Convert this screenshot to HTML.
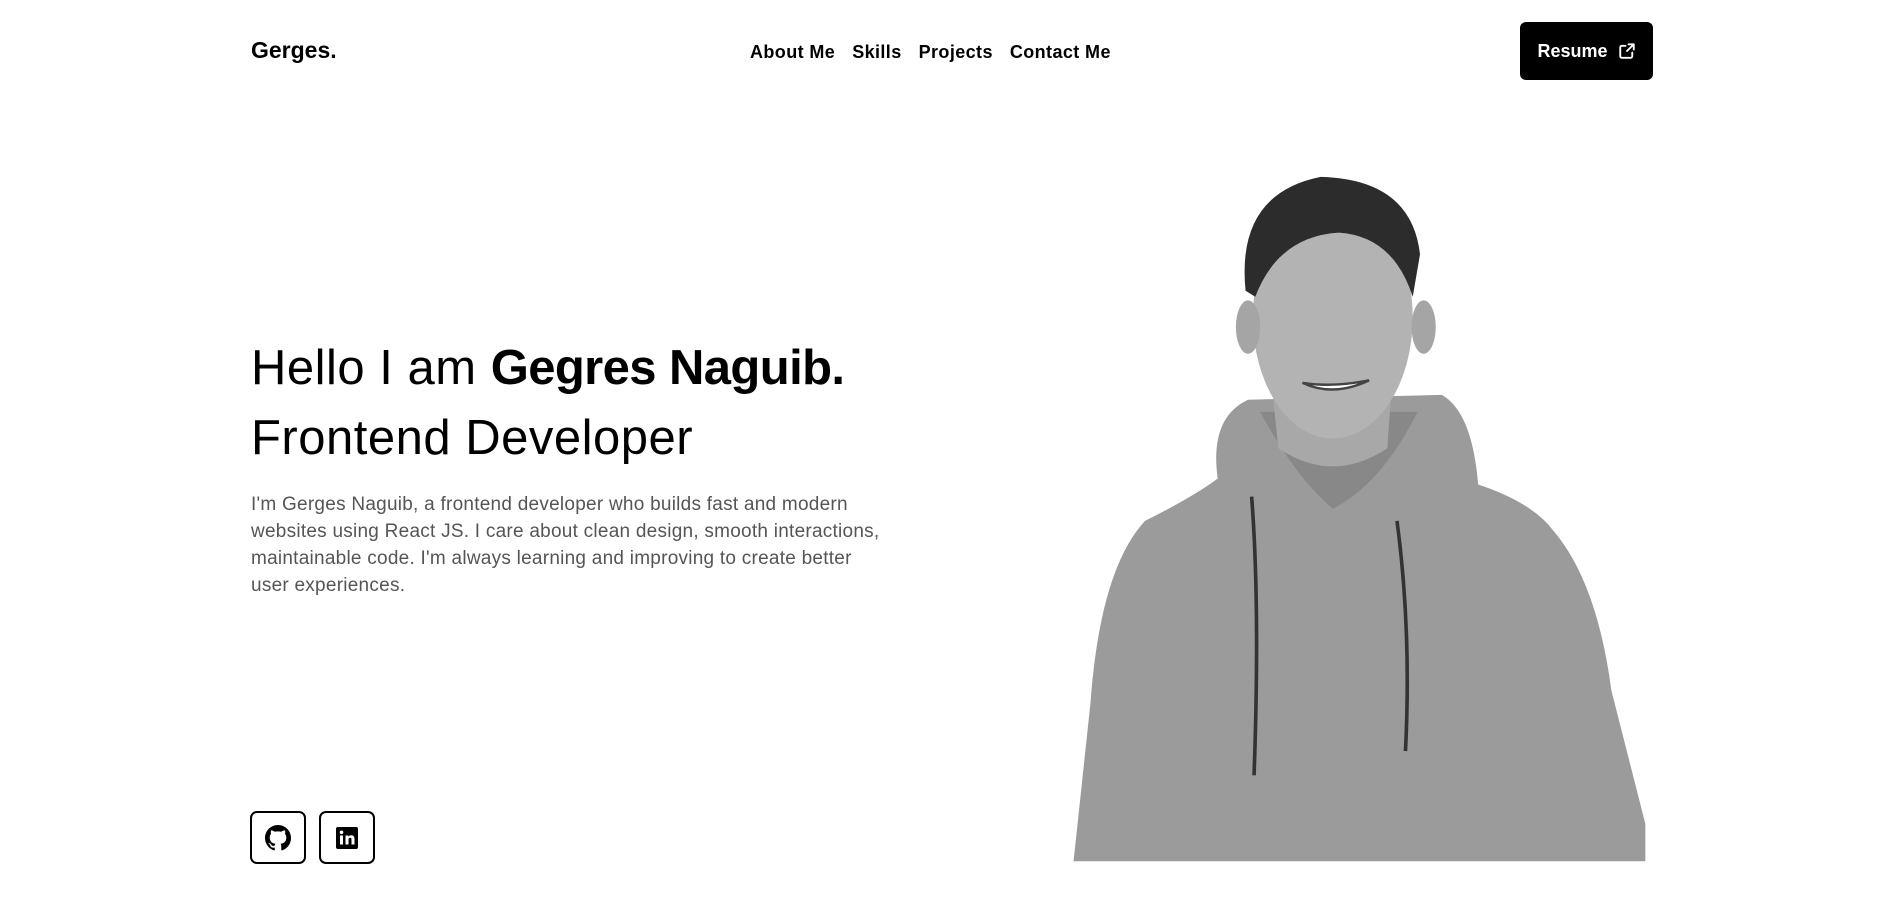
<!DOCTYPE html>
<html><head><meta charset="utf-8"><style>
*{margin:0;padding:0;box-sizing:border-box}
body{width:1900px;height:917px;background:#fff;position:relative;overflow:hidden;font-family:"Liberation Sans",sans-serif;color:#000}
.logo{position:absolute;left:251px;top:37px;font-size:23px;font-weight:700}
.nav{position:absolute;left:750px;top:42px;font-size:18px;font-weight:700;display:flex;gap:17px;letter-spacing:0.4px}
.btn{position:absolute;left:1520px;top:22px;width:133px;height:58px;background:#000;border-radius:6px;color:#fff;font-weight:700;font-size:18px;display:flex;align-items:center;justify-content:center;gap:10px}
h1{position:absolute;left:251px;top:333px;font-size:49px;font-weight:400;line-height:70px;letter-spacing:0.5px;white-space:nowrap}
h1 b{letter-spacing:-0.6px}
p{position:absolute;left:251px;top:491px;font-size:19px;line-height:27px;color:#555;white-space:nowrap;letter-spacing:0.25px}
.soc{position:absolute;top:811px;width:56px;height:53px;border:2px solid #000;border-radius:7px;display:flex;align-items:center;justify-content:center}
svg.ph{position:absolute;left:0;top:0}
</style></head><body>
<svg class="ph" width="1900" height="917" viewBox="0 0 1568 757">
<path d="M886,711 L900,580 Q908,470 945,430 Q985,410 1005,395 Q998,345 1030,330 L1190,326 Q1215,340 1220,400 Q1265,415 1282,438 Q1318,480 1330,570 L1358,680 L1358,711 Z" fill="#9b9b9b"/>
<path d="M1040,340 Q1070,395 1100,420 Q1140,400 1170,340 Z" fill="#888"/>
<path d="M1048,300 L1150,300 L1145,370 Q1100,400 1055,370 Z" fill="#a8a8a8"/>
<ellipse cx="1100" cy="262" rx="66" ry="100" fill="#b3b3b3"/>
<ellipse cx="1030" cy="270" rx="10" ry="22" fill="#a5a5a5"/>
<ellipse cx="1175" cy="270" rx="10" ry="22" fill="#a5a5a5"/>
<path d="M1028,240 Q1020,160 1090,146 Q1165,148 1172,210 L1166,245 Q1150,195 1105,192 Q1055,195 1036,245 Z" fill="#2c2c2c"/>
<path d="M1075,316 Q1100,328 1130,314 Q1100,320 1075,316 Z" fill="#fff" stroke="#444" stroke-width="2"/>
<path d="M1033,410 Q1040,500 1035,640" stroke="#333" stroke-width="3" fill="none"/>
<path d="M1153,430 Q1165,520 1160,620" stroke="#333" stroke-width="3" fill="none"/>
</svg>
<div class="logo">Gerges.</div>
<div class="nav"><span>About Me</span><span>Skills</span><span>Projects</span><span>Contact Me</span></div>
<div class="btn">Resume <svg width="18" height="18" viewBox="0 0 24 24" fill="none" stroke="#fff" stroke-width="2.5" stroke-linecap="round" stroke-linejoin="round"><path d="M14 3h7v7M21 3l-9 9M19 14v5a2 2 0 0 1-2 2H5a2 2 0 0 1-2-2V7a2 2 0 0 1 2-2h5"/></svg></div>
<h1>Hello I am <b>Gegres Naguib.</b><br>Frontend Developer</h1>
<p>I'm Gerges Naguib, a frontend developer who builds fast and modern<br>websites using React JS. I care about clean design, smooth interactions,<br>maintainable code. I'm always learning and improving to create better<br>user experiences.</p>
<div class="soc" style="left:250px"><svg width="26" height="26" viewBox="0 0 16 16"><path fill="#000" d="M8 0C3.58 0 0 3.58 0 8c0 3.54 2.29 6.53 5.47 7.59.4.07.55-.17.55-.38v-1.33c-2.23.48-2.7-1.07-2.7-1.07-.36-.92-.89-1.17-.89-1.17-.73-.5.05-.49.05-.49.8.06 1.23.83 1.23.83.72 1.22 1.87.87 2.33.66.07-.52.28-.87.51-1.07-1.78-.2-3.64-.89-3.64-3.95 0-.87.31-1.59.82-2.15-.08-.2-.36-1.02.08-2.12 0 0 .67-.21 2.2.82a7.6 7.6 0 0 1 4 0c1.53-1.04 2.2-.82 2.2-.82.44 1.1.16 1.92.08 2.12.51.56.82 1.27.82 2.15 0 3.07-1.87 3.75-3.65 3.95.29.25.54.73.54 1.48v2.2c0 .21.15.46.55.38A8 8 0 0 0 16 8c0-4.42-3.58-8-8-8z"/></svg></div>
<div class="soc" style="left:319px"><svg width="24" height="24" viewBox="0 0 24 24"><rect x="1" y="1" width="22" height="22" rx="2" fill="#000"/><rect x="5" y="9.5" width="3" height="9" fill="#fff"/><circle cx="6.5" cy="6.3" r="1.8" fill="#fff"/><path d="M10.5 9.5h2.9v1.3c.5-.9 1.6-1.5 2.9-1.5 2.3 0 3.2 1.4 3.2 3.8v5.4h-3v-4.8c0-1.2-.3-2-1.4-2s-1.6.8-1.6 2v4.8h-3z" fill="#fff"/></svg></div>
</body></html>
